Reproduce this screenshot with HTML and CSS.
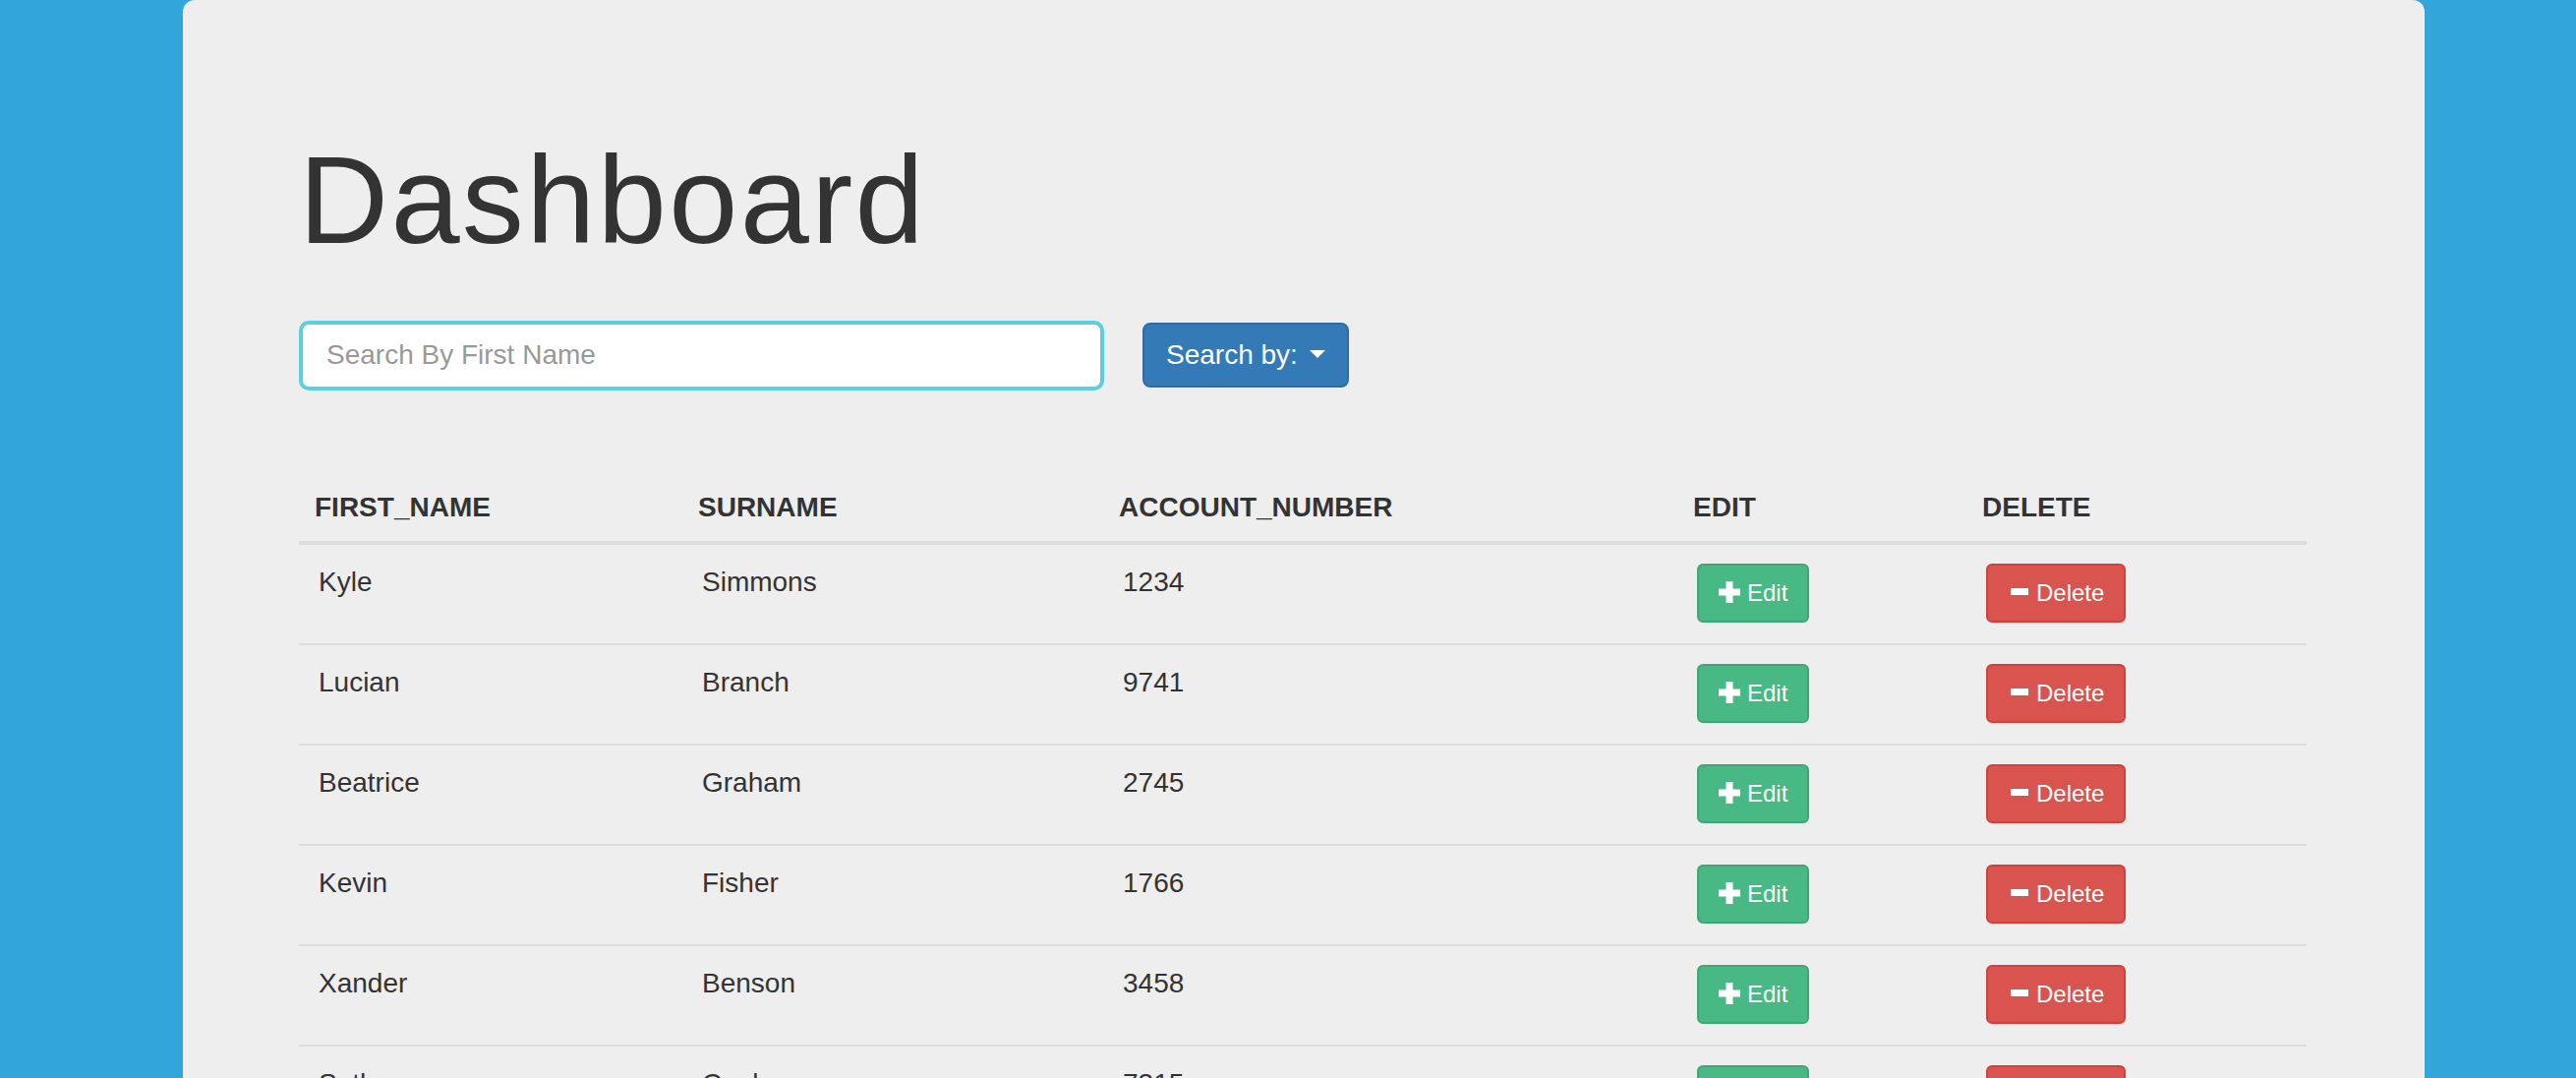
FILE: index.html
```html
<!DOCTYPE html>
<html lang="en">
<head>
<meta charset="utf-8">
<title>Dashboard</title>
<link rel="stylesheet" href="styles.css">
</head>
<body>
<div class="page">
  <div class="jumbotron">
    <h1 class="title">Dashboard</h1>
    <div class="search-row">
      <input class="search-input" type="text" placeholder="Search By First Name">
      <button class="btn-primary" type="button">Search by: <span class="caret"></span></button>
    </div>
    <table class="data-table">
      <colgroup>
        <col class="c1"><col class="c2"><col class="c3"><col class="c4"><col class="c5">
      </colgroup>
      <thead>
        <tr><th>FIRST_NAME</th><th>SURNAME</th><th>ACCOUNT_NUMBER</th><th>EDIT</th><th>DELETE</th></tr>
      </thead>
      <tbody>
        <tr><td>Kyle</td><td>Simmons</td><td>1234</td>
          <td><button class="action-btn btn-edit" type="button"><svg class="icon" width="24" height="24" viewBox="0 0 24 24"><rect x="0" y="7.5" width="22" height="7" fill="#fff"/><rect x="7.5" y="0" width="7" height="22" fill="#fff"/></svg><span>Edit</span></button></td>
          <td><button class="action-btn btn-delete" type="button"><svg class="icon" width="24" height="24" viewBox="0 0 24 24"><rect x="3" y="7" width="18" height="7" fill="#fff"/></svg><span>Delete</span></button></td></tr>
        <tr><td>Lucian</td><td>Branch</td><td>9741</td>
          <td><button class="action-btn btn-edit" type="button"><svg class="icon" width="24" height="24" viewBox="0 0 24 24"><rect x="0" y="7.5" width="22" height="7" fill="#fff"/><rect x="7.5" y="0" width="7" height="22" fill="#fff"/></svg><span>Edit</span></button></td>
          <td><button class="action-btn btn-delete" type="button"><svg class="icon" width="24" height="24" viewBox="0 0 24 24"><rect x="3" y="7" width="18" height="7" fill="#fff"/></svg><span>Delete</span></button></td></tr>
        <tr><td>Beatrice</td><td>Graham</td><td>2745</td>
          <td><button class="action-btn btn-edit" type="button"><svg class="icon" width="24" height="24" viewBox="0 0 24 24"><rect x="0" y="7.5" width="22" height="7" fill="#fff"/><rect x="7.5" y="0" width="7" height="22" fill="#fff"/></svg><span>Edit</span></button></td>
          <td><button class="action-btn btn-delete" type="button"><svg class="icon" width="24" height="24" viewBox="0 0 24 24"><rect x="3" y="7" width="18" height="7" fill="#fff"/></svg><span>Delete</span></button></td></tr>
        <tr><td>Kevin</td><td>Fisher</td><td>1766</td>
          <td><button class="action-btn btn-edit" type="button"><svg class="icon" width="24" height="24" viewBox="0 0 24 24"><rect x="0" y="7.5" width="22" height="7" fill="#fff"/><rect x="7.5" y="0" width="7" height="22" fill="#fff"/></svg><span>Edit</span></button></td>
          <td><button class="action-btn btn-delete" type="button"><svg class="icon" width="24" height="24" viewBox="0 0 24 24"><rect x="3" y="7" width="18" height="7" fill="#fff"/></svg><span>Delete</span></button></td></tr>
        <tr><td>Xander</td><td>Benson</td><td>3458</td>
          <td><button class="action-btn btn-edit" type="button"><svg class="icon" width="24" height="24" viewBox="0 0 24 24"><rect x="0" y="7.5" width="22" height="7" fill="#fff"/><rect x="7.5" y="0" width="7" height="22" fill="#fff"/></svg><span>Edit</span></button></td>
          <td><button class="action-btn btn-delete" type="button"><svg class="icon" width="24" height="24" viewBox="0 0 24 24"><rect x="3" y="7" width="18" height="7" fill="#fff"/></svg><span>Delete</span></button></td></tr>
        <tr><td>Seth</td><td>Cook</td><td>7315</td>
          <td><button class="action-btn btn-edit" type="button"><svg class="icon" width="24" height="24" viewBox="0 0 24 24"><rect x="0" y="7.5" width="22" height="7" fill="#fff"/><rect x="7.5" y="0" width="7" height="22" fill="#fff"/></svg><span>Edit</span></button></td>
          <td><button class="action-btn btn-delete" type="button"><svg class="icon" width="24" height="24" viewBox="0 0 24 24"><rect x="3" y="7" width="18" height="7" fill="#fff"/></svg><span>Delete</span></button></td></tr>
      </tbody>
    </table>
  </div>
</div>
</body>
</html>
```
FILE: styles.css
```css
html, body {
  margin: 0;
  height: 100%;
  overflow: hidden;
}
body {
  background: #32a5da;
  font-family: "Liberation Sans", Arial, Helvetica, sans-serif;
  color: #333;
}
.page {
  padding-left: 186px;
}
.jumbotron {
  width: 2280px;
  box-sizing: border-box;
  background: #eee;
  border-radius: 12px;
  padding: 96px 120px 96px 118px;
  min-height: 1500px;
}
.title {
  font-size: 126px;
  line-height: 138.6px;
  font-weight: normal;
  margin: 39px 0 0;
  letter-spacing: 2.4px;
  color: #333;
}
.search-row {
  display: flex;
  align-items: flex-start;
  gap: 39px;
  margin-top: 52px;
}
.search-input {
  width: 819px;
  height: 71px;
  box-sizing: border-box;
  border: 4px solid #5bcfde;
  border-radius: 10px;
  padding: 0 24px;
  font-family: "Liberation Sans", Arial, sans-serif;
  font-size: 28px;
  color: #555;
  background: #fff;
  outline: none;
}
.search-input::placeholder {
  color: #999;
}
.btn-primary {
  margin-top: 2px;
  height: 66px;
  box-sizing: border-box;
  padding: 0 22px;
  border: 2px solid #2e6da4;
  border-radius: 8px;
  background: #337ab7;
  color: #fff;
  font-family: "Liberation Sans", Arial, sans-serif;
  font-size: 28px;
  line-height: 40px;
  white-space: nowrap;
}
.caret {
  display: inline-block;
  width: 0;
  height: 0;
  margin-left: 4px;
  vertical-align: middle;
  border-top: 8px solid #fff;
  border-left: 8px solid transparent;
  border-right: 8px solid transparent;
  position: relative;
  top: -2px;
}
.data-table {
  width: 100%;
  margin-top: 81px;
  border-collapse: separate;
  border-spacing: 0;
  table-layout: fixed;
  font-size: 28px;
  line-height: 40px;
}
.c1 { width: 390px; }
.c2 { width: 428px; }
.c3 { width: 584px; }
.c4 { width: 294px; }
.c5 { width: 346px; }
.data-table th {
  text-align: left;
  font-weight: bold;
  padding: 18px 16px 14px;
  border-bottom: 2px solid #ddd;
  vertical-align: bottom;
}
.data-table td {
  padding: 18px 16px 16px 20px;
  border-top: 2px solid #ddd;
  vertical-align: top;
}
.action-btn {
  display: inline-flex;
  align-items: center;
  gap: 5px;
  height: 60px;
  margin: 1px 0 5px;
  box-sizing: border-box;
  padding: 0 20px;
  border: 2px solid;
  border-radius: 6px;
  color: #fff;
  font-family: "Liberation Sans", Arial, sans-serif;
  font-size: 24px;
  line-height: 36px;
  vertical-align: top;
}
.icon {
  display: block;
  flex: none;
}
.btn-edit {
  background: #48b884;
  border-color: #3ea775;
}
.btn-delete {
  background: #d9534f;
  border-color: #d43f3a;
}
```
